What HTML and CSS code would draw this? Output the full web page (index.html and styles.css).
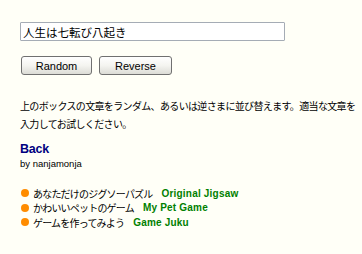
FILE: index.html
```html
<!DOCTYPE html>
<html lang="ja">
<head>
<meta charset="utf-8">
<link rel="stylesheet" href="styles.css">
</head>
<body>
<div class="page">
  <input class="phrase" type="text" value="人生は七転び八起き">
  <div class="buttons">
    <button class="btn">Random</button>
    <button class="btn btn-rev">Reverse</button>
  </div>
  <p class="desc">上のボックスの文章をランダム、あるいは逆さまに並び替えます。適当な文章を入力してお試しください。</p>
  <a class="back" href="#">Back</a>
  <div class="by">by nanjamonja</div>
  <ul class="links">
    <li><span class="dot"></span><span class="jp">あなただけのジグソーパズル</span><a href="#">Original Jigsaw</a></li>
    <li><span class="dot"></span><span class="jp">かわいいペットのゲーム</span><a href="#">My Pet Game</a></li>
    <li><span class="dot"></span><span class="jp">ゲームを作ってみよう</span><a href="#">Game Juku</a></li>
  </ul>
</div>
</body>
</html>
```
FILE: styles.css
```css
html, body { margin: 0; padding: 0; }
body {
  background: #fffff7;
  font-family: "Noto Sans CJK JP", sans-serif;
  font-size: 11px;
  color: #000;
}
.page {
  padding: 22px 20px 0 20px;
  display: flex;
  flex-direction: column;
  align-items: flex-start;
}
.phrase {
  box-sizing: border-box;
  width: 265px;
  height: 19px;
  margin: 0;
  padding: 0 2px;
  border: 1px solid #a5acb5;
  border-radius: 1px;
  background: #fff;
  font-family: "Noto Sans CJK JP", sans-serif;
  font-size: 11.5px;
  color: #000;
}
.buttons {
  display: flex;
  gap: 7px;
  margin-top: 15px;
  margin-left: 1px;
}
.btn {
  box-sizing: border-box;
  width: 71px;
  height: 19px;
  padding: 0;
  border: 1px solid #707070;
  border-radius: 3px;
  background: linear-gradient(#ffffff, #f4f4f0 50%, #dcdcd6);
  font-family: "Liberation Sans", sans-serif;
  font-size: 11px;
  color: #000;
}
.btn-rev { width: 73px; }
.desc {
  margin: 22px 0 0 0;
  width: 337px;
  line-height: 18px;
  font-size: 10px;
  letter-spacing: -0.65px;
}
.back {
  margin-top: 9px;
  font-family: "Liberation Sans", sans-serif;
  font-weight: bold;
  font-size: 12.5px;
  letter-spacing: -0.2px;
  color: #000080;
  text-decoration: none;
}
.by {
  margin-top: 2px;
  font-family: "Liberation Sans", sans-serif;
  font-size: 9.5px;
}
.links {
  list-style: none;
  margin: 17px 0 0 0;
  padding: 0;
}
.links li {
  display: flex;
  align-items: center;
  height: 14.5px;
}
.jp {
  margin-left: 4px;
  font-size: 10px;
  letter-spacing: -0.8px;
}
.links a {
  margin-left: 9px;
  font-family: "Liberation Sans", sans-serif;
  font-weight: bold;
  font-size: 10px;
  letter-spacing: 0.2px;
  color: #008000;
  text-decoration: none;
}
.dot {
  margin-left: 1px;
  width: 8px;
  height: 8px;
  border-radius: 50%;
  background: #ff8c00;
}
```
